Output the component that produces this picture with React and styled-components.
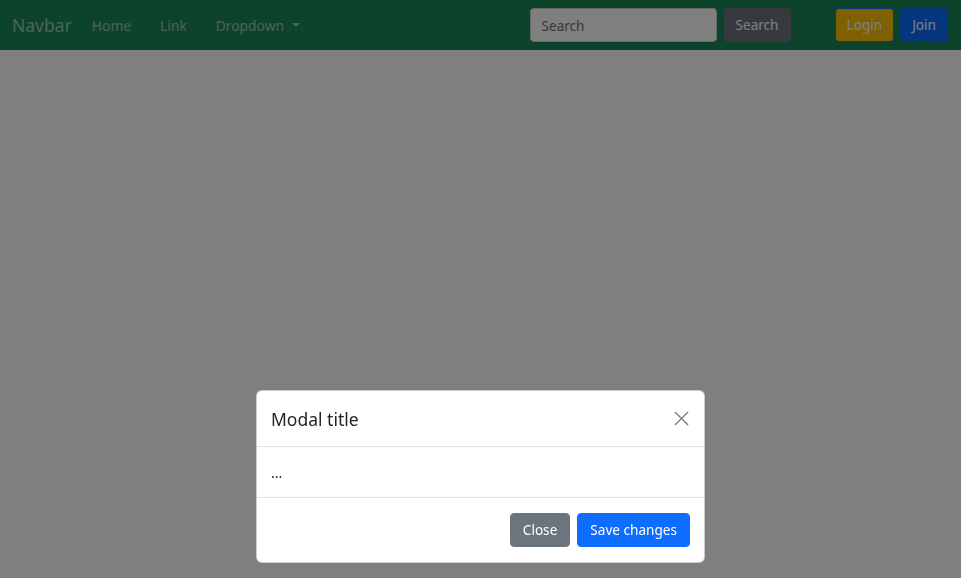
import React from 'react';
import styled, { createGlobalStyle } from 'styled-components';

const GlobalStyle = createGlobalStyle`
  html, body {
    margin: 0;
    padding: 0;
    background: #fff;
    font-family: "Noto Sans", "Open Sans", sans-serif;
    color: #212529;
  }
  * { box-sizing: border-box; }
`;

const Navbar = styled.nav`
  height: 50px;
  background: #198754;
  display: flex;
  align-items: center;
  padding: 0 13px 0 12px;
`;

const Brand = styled.a`
  font-size: 17.5px;
  color: rgba(255, 255, 255, 0.55);
  margin-right: 20px;
  text-decoration: none;
`;

const NavList = styled.ul`
  display: flex;
  gap: 29px;
  list-style: none;
  margin: 0;
  padding: 0;
  flex: 1;
`;

const NavLink = styled.a`
  font-size: 13.8px;
  color: rgba(255, 255, 255, 0.55);
  text-decoration: none;
  display: flex;
  align-items: center;

  ${(p) => p.$dropdown && `
    &::after {
      content: "";
      margin-left: 8px;
      border-top: 4.5px solid;
      border-left: 4px solid transparent;
      border-right: 4px solid transparent;
    }
  `}
`;

const SearchForm = styled.form`
  display: flex;
  gap: 7px;
  margin-right: 44px;
`;

const SearchInput = styled.input`
  width: 187px;
  height: 34px;
  padding: 0 11px;
  border: 1px solid #ced4da;
  border-radius: 4px;
  font-family: inherit;
  font-size: 13.6px;
  color: #212529;
  background: #fff;
  &::placeholder { color: #6c757d; }
`;

const Btn = styled.button`
  height: 34px;
  padding: 0 ${(p) => p.$px || 12}px;
  border: 1px solid ${(p) => p.$border || p.$bg};
  border-radius: 4px;
  background: ${(p) => p.$bg};
  color: ${(p) => p.$color || '#fff'};
  font-family: inherit;
  font-size: 13.6px;
  line-height: 1;
  cursor: pointer;
`;

const Actions = styled.div`
  display: flex;
  gap: 6px;
`;

const Backdrop = styled.div`
  position: fixed;
  inset: 0;
  background: rgba(0, 0, 0, 0.5);
  display: flex;
  justify-content: center;
  align-items: flex-end;
  padding-bottom: 15px;
`;

const Dialog = styled.div`
  width: 449px;
  background: #fff;
  border: 1px solid rgba(0, 0, 0, 0.2);
  border-radius: 6px;
`;

const Header = styled.div`
  display: flex;
  align-items: center;
  justify-content: space-between;
  padding: 16px 14px 16px 14px;
  border-bottom: 1px solid #dee2e6;
  height: 56px;
`;

const Title = styled.h5`
  margin: 0;
  font-size: 17.5px;
  font-weight: 400;
  color: #212529;
`;

const CloseX = styled.button`
  width: 18px;
  height: 18px;
  padding: 0;
  border: 0;
  background: transparent;
  color: #000;
  opacity: 0.5;
  display: flex;
  align-items: center;
  justify-content: center;
`;

const Body = styled.div`
  height: 51px;
  padding: 0 14px;
  display: flex;
  align-items: center;
  font-size: 14px;
  border-bottom: 1px solid #dee2e6;
`;

const Footer = styled.div`
  display: flex;
  justify-content: flex-end;
  gap: 7px;
  padding: 15px 14px 15px;
`;

export default function App() {
  return (
    <>
      <GlobalStyle />
      <Navbar>
        <Brand href="#">Navbar</Brand>
        <NavList>
          <li><NavLink href="#">Home</NavLink></li>
          <li><NavLink href="#">Link</NavLink></li>
          <li><NavLink href="#" $dropdown>Dropdown</NavLink></li>
        </NavList>
        <SearchForm onSubmit={(e) => e.preventDefault()}>
          <SearchInput placeholder="Search" />
          <Btn type="submit" $bg="#6c757d" $px={11}>Search</Btn>
        </SearchForm>
        <Actions>
          <Btn $bg="#ffc107" $border="#0d6efd" $color="#fff" $px={11}>Login</Btn>
          <Btn $bg="#0d6efd" $px={11}>Join</Btn>
        </Actions>
      </Navbar>
      <Backdrop>
        <Dialog>
          <Header>
            <Title>Modal title</Title>
            <CloseX aria-label="Close">
              <svg width="15" height="15" viewBox="0 0 16 16">
                <path d="M1 1L15 15M15 1L1 15" stroke="currentColor" strokeWidth="1.5" />
              </svg>
            </CloseX>
          </Header>
          <Body>...</Body>
          <Footer>
            <Btn $bg="#6c757d">Close</Btn>
            <Btn $bg="#0d6efd">Save changes</Btn>
          </Footer>
        </Dialog>
      </Backdrop>
    </>
  );
}
